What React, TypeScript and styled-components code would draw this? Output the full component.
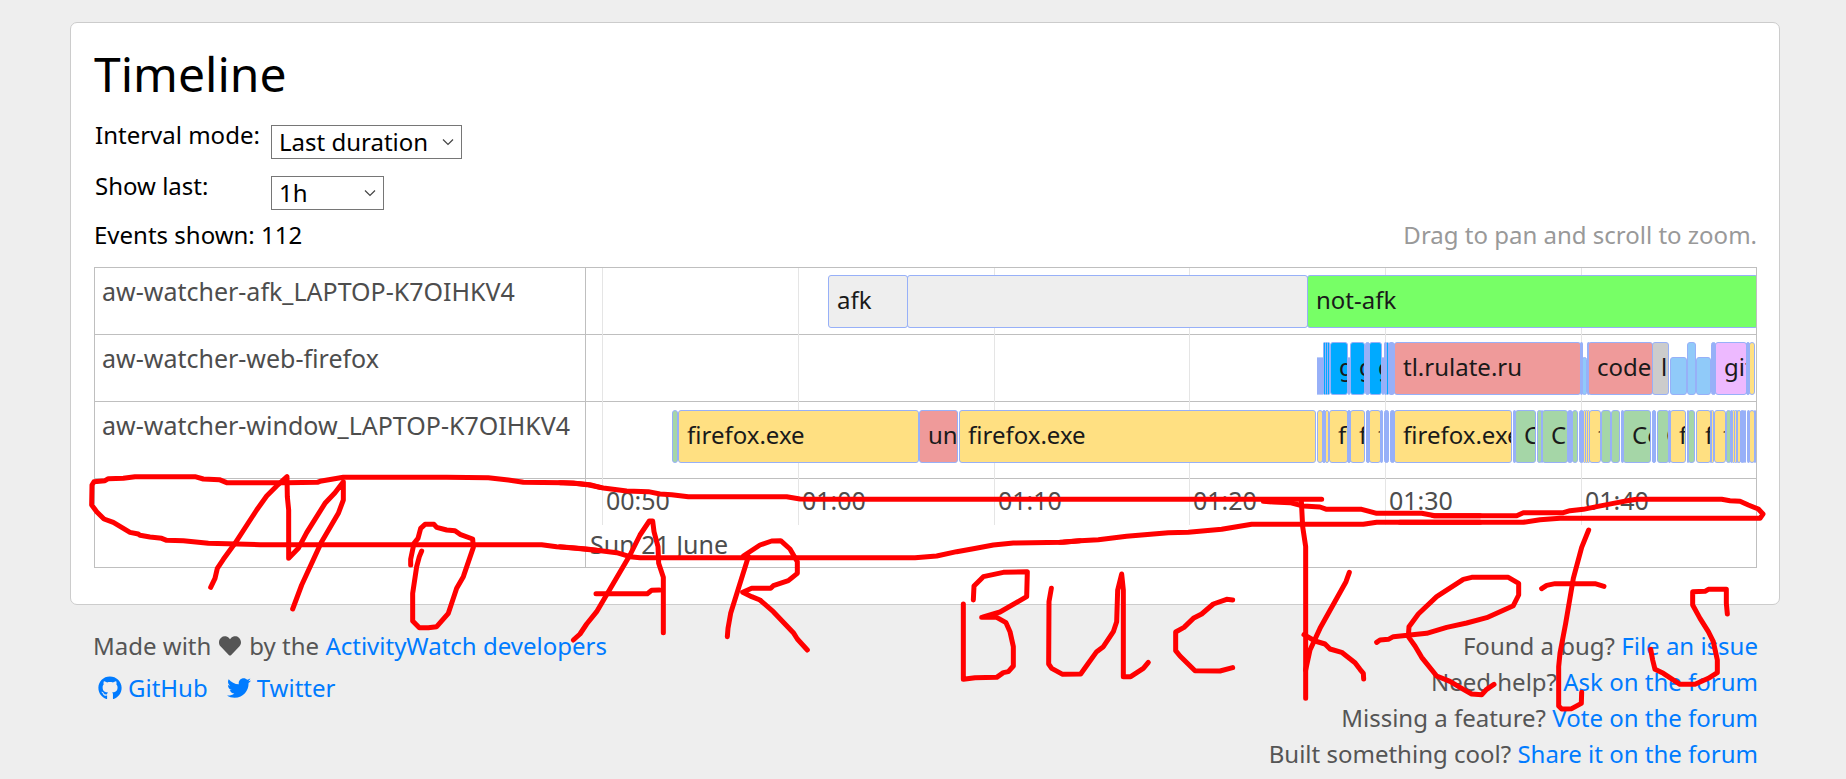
import React from "react";
import styled, { createGlobalStyle } from "styled-components";
import { FaGithub, FaHeart, FaTwitter } from "react-icons/fa";

const GlobalStyle = createGlobalStyle`
  *, *::before, *::after { box-sizing: border-box; }
  html { background: #eee; }
  body {
    margin: 0;
    background: #eee;
    color: #000;
    font: 24px/36px "Noto Sans", "Open Sans", sans-serif;
  }
`;

const Page = styled.div`
  position: relative;
  padding: 22px 66px 7px 70px;
`;

const Card = styled.main`
  padding: 22px 22px 36px 23px;
  background: #fff;
  border: 1px solid #ccc;
  border-radius: 7px;
`;

const Title = styled.h1`
  margin: 0 0 14px;
  font-size: 48px;
  line-height: 58px;
  font-weight: 400;
`;

const Settings = styled.form`
  display: grid;
  grid-template-columns: 176px auto;
  row-gap: 9px;
  align-items: start;
  padding-left: 1px;
`;

const SelectBox = styled.div<{ $width: number }>`
  display: grid;
  align-items: center;
  width: ${(p) => p.$width}px;
  margin-top: 8px;
  > * { grid-area: 1 / 1; }
  > svg { justify-self: end; margin-right: 8px; pointer-events: none; }
`;

const Select = styled.select`
  appearance: none;
  width: 100%;
  height: 34px;
  padding: 0 26px 0 7px;
  border: 1px solid #767676;
  border-radius: 0;
  background: #fff;
  color: #000;
  font: inherit;
  line-height: 32px;
`;

const Summary = styled.div`
  display: flex;
  justify-content: space-between;
  margin: 7px 0 14px;
`;

const Hint = styled.span`
  color: #999;
`;

const Timeline = styled.section`
  display: flex;
  border: 1px solid #bfbfbf;
  color: #4d4d4d;
  font-size: 25px;
`;

const Buckets = styled.div`
  flex: none;
  width: 491px;
  border-right: 1px solid #bfbfbf;
`;

const BucketName = styled.div<{ $tall?: boolean }>`
  height: ${(p) => (p.$tall ? 77 : 67)}px;
  padding: 5px 7px;
  border-bottom: 1px solid #bfbfbf;
  white-space: nowrap;
`;

const Tracks = styled.div`
  position: relative;
  flex: 1;
  min-width: 0;
  overflow: hidden;
`;

const GridLine = styled.div`
  position: absolute;
  top: 0;
  bottom: 42px;
  width: 1px;
  background: #e5e5e5;
`;

const Lane = styled.div<{ $tall?: boolean }>`
  height: ${(p) => (p.$tall ? 77 : 67)}px;
  padding-top: ${(p) => (p.$tall ? 8 : 7)}px;
  border-bottom: 1px solid #bfbfbf;
`;

const LaneCanvas = styled.div`
  position: relative;
  height: 53px;
`;

const Event = styled.div<{ $color: string; $short?: boolean }>`
  position: absolute;
  bottom: 0;
  height: ${(p) => (p.$short ? 38 : 53)}px;
  padding: 6px 0 0 8px;
  overflow: hidden;
  border: 1px solid #97b0f8;
  border-radius: 3px;
  background: ${(p) => p.$color};
  color: #1a1a1a;
  font-size: 24px;
  white-space: nowrap;
`;

const Axis = styled.div`
  height: 88px;
  padding-top: 3px;
`;

const Times = styled.div`
  position: relative;
  height: 44px;
`;

const Time = styled.span`
  position: absolute;
  padding-left: 4px;
`;

const Day = styled.div`
  padding-left: 4px;
`;

const Footer = styled.footer`
  display: flex;
  justify-content: space-between;
  padding: 23px 22px 0 23px;
  color: #555;
`;

const Credits = styled.div`
  display: flex;
  flex-direction: column;
  gap: 6px;
`;

const Line = styled.div`
  display: flex;
  align-items: center;
  gap: 8px;
`;

const Socials = styled(Line)`
  gap: 19px;
  padding-left: 5px;
`;

const Link = styled.a`
  color: #007bff;
  text-decoration: none;
`;

const SocialLink = styled(Link)`
  display: flex;
  align-items: center;
  gap: 6px;
`;

const Help = styled.div`
  text-align: right;
`;

const Annotation = styled.svg`
  position: absolute;
  top: 0;
  left: 0;
  width: 100%;
  pointer-events: none;
  fill: none;
  stroke: #f00;
  stroke-width: 15;
  stroke-linecap: round;
  stroke-linejoin: round;
`;

// Visible span of the timeline, in three-second ticks.
const SPAN = 1170;
const at = (tick: number) => `${(tick / SPAN) * 100}%`;

const GREY = "#eee";
const LIME = "#77ff66";
const AMBER = "#ffe082";
const ROSE = "#ef9a9a";
const LEAF = "#a5d6a7";
const AZURE = "#00aaff";
const SKY = "#90caf9";
const SILVER = "#ccc";
const ORCHID = "#edb9ff";
const BLIP = "#97b0f8";

type Ev = [start: number, end: number, color: string, text?: string, short?: boolean];

const afk: Ev[] = [
  [242, 322, GREY, "afk"],
  [321, 722, GREY],
  [721, 1172, LIME, "not-afk"],
];

const web: Ev[] = [
  [731, 733, SKY, "", true],
  [733, 735, SKY, "", true],
  [735, 737, SKY, "", true],
  [737, 740, AZURE],
  [739, 742, AZURE],
  [741, 744, AZURE],
  [744, 762, AZURE, "github.com"],
  [762, 764, BLIP, "", true],
  [764, 779, AZURE, "github.com"],
  [779, 784, BLIP],
  [783, 796, AZURE, "github.com"],
  [796, 798, BLIP, "", true],
  [798, 801, BLIP],
  [800, 803, AZURE],
  [802, 809, BLIP],
  [808, 995, ROSE, "tl.rulate.ru"],
  [994, 997, BLIP],
  [996, 1001, SKY, "", true],
  [1001, 1004, BLIP],
  [1002, 1067, ROSE, "codeload"],
  [1066, 1083, SILVER, "localhost"],
  [1084, 1101, SKY, "", true],
  [1101, 1110, SKY],
  [1110, 1125, SKY, "", true],
  [1125, 1130, BLIP],
  [1129, 1161, ORCHID, "github"],
  [1160, 1164, BLIP],
  [1163, 1169, AMBER],
];

const windows: Ev[] = [
  [86, 92, LEAF],
  [92, 333, AMBER, "firefox.exe"],
  [333, 372, ROSE, "unknown"],
  [373, 730, AMBER, "firefox.exe"],
  [731, 737, AMBER],
  [736, 740, BLIP],
  [739, 743, AMBER],
  [743, 762, AMBER, "firefox.exe"],
  [761, 765, BLIP],
  [764, 779, AMBER, "firefox.exe"],
  [780, 784, BLIP],
  [783, 795, AMBER, "firefox.exe"],
  [794, 797, BLIP],
  [798, 803, BLIP],
  [804, 809, BLIP],
  [808, 926, AMBER, "firefox.exe"],
  [927, 930, BLIP],
  [929, 950, LEAF, "Code.exe"],
  [951, 956, LEAF],
  [955, 957, BLIP],
  [956, 982, LEAF, "Code.exe"],
  [981, 987, BLIP],
  [986, 992, LEAF],
  [993, 998, BLIP],
  [997, 1000, AMBER],
  [999, 1002, AMBER],
  [1001, 1004, AMBER],
  [1003, 1015, AMBER, "firefox.exe"],
  [1015, 1025, LEAF],
  [1025, 1034, LEAF],
  [1035, 1038, BLIP],
  [1037, 1065, LEAF, "Code.exe"],
  [1066, 1070, BLIP],
  [1071, 1083, LEAF, "Code.exe"],
  [1082, 1085, BLIP],
  [1084, 1100, AMBER, "firefox.exe"],
  [1101, 1103, BLIP],
  [1102, 1109, LEAF],
  [1110, 1125, AMBER, "firefox.exe"],
  [1124, 1126, BLIP],
  [1125, 1128, AMBER],
  [1128, 1140, AMBER, "firefox.exe"],
  [1140, 1145, LEAF],
  [1144, 1147, BLIP],
  [1146, 1149, AMBER],
  [1148, 1151, AMBER],
  [1150, 1152, BLIP],
  [1151, 1155, AMBER],
  [1154, 1159, BLIP],
  [1158, 1160, AMBER],
  [1161, 1164, BLIP],
  [1163, 1169, AMBER],
  [1168, 1170, BLIP],
];

const ticks: [number, string][] = [
  [16, "00:50"],
  [212, "01:00"],
  [408, "01:10"],
  [603, "01:20"],
  [799, "01:30"],
  [995, "01:40"],
];

const helpLinks = [
  ["Found a bug?", "File an issue"],
  ["Need help?", "Ask on the forum"],
  ["Missing a feature?", "Vote on the forum"],
  ["Built something cool?", "Share it on the forum"],
];

function Chevron() {
  return (
    <svg width="12" height="8" viewBox="0 0 12 8" fill="none" stroke="#444" strokeWidth="1.2" aria-hidden="true">
      <path d="M1 1.5 L6 6.5 L11 1.5" />
    </svg>
  );
}

function Bars({ events, tall }: { events: Ev[]; tall?: boolean }) {
  return (
    <Lane $tall={tall}>
      <LaneCanvas>
        {events.map(([start, end, color, text, short]) => (
          <Event
            key={start}
            $color={color}
            $short={short}
            style={{
              left: at(start),
              width: at(end - start),
              ...(end - start < 10 ? { padding: 0 } : null),
            }}
          >
            {text}
          </Event>
        ))}
      </LaneCanvas>
    </Lane>
  );
}

function Scribble() {
  return (
    <Annotation viewBox="0 0 5538 2337" aria-hidden="true">
      <g transform="translate(240 1380)">
        <polyline points="1560,82 1530,74 1500,71 1450,68 1330,67 1285,60 1225,53 1100,52 790,52 720,64 712,67 620,68 440,68 418,59 370,57 345,50 165,50 130,55 85,56 75,62 42,65 36,75 35,135 50,155 72,177 100,187 150,217 175,222 180,226 210,231 245,235 260,241 310,242 385,250 540,254 1385,254 1430,260 1480,264 1560,272" />
        <polyline points="392,382 405,355 412,325 430,298 465,250 530,150 560,108 590,78 621,50 622,110 626,150 626,295 655,265 680,218 735,130 765,98 790,65 790,120 775,160 725,245 665,375 638,447" />
        <polyline points="992,315 992,298 1002,250 1014,235 1022,205 1035,193 1062,193 1070,202 1100,210 1125,212 1140,223 1178,237 1180,262 1150,350 1130,385 1105,460 1070,500 1045,503 1018,503 998,483 998,400 1010,320 1018,290 1025,273" />
      </g>
      <g transform="translate(1680 1380)">
        <polyline points="0,68 40,69 80,74 130,84 200,93 265,95 300,102 335,104 385,110 680,110 720,117 760,118 2285,118" />
        <polyline points="0,260 80,267 170,278 210,290 240,293 1065,293 1130,288 1190,275 1240,266 1300,255 1360,249 1510,247 1560,242" />
        <polyline points="40,540 60,522 80,492 110,455 210,285 240,225 268,183 278,183 282,215 294,260 296,310 310,352 310,518" />
        <polyline points="108,401 262,401 275,391 298,390" />
        <polyline points="502,530 504,505 512,460 565,290 550,288 600,255 635,243 662,242 690,267 712,305 712,340 685,362 640,377 632,385 575,385 548,397 575,410 600,420 640,455 700,518 712,537 742,570" />
        <polyline points="1210,432 1210,658 1245,653 1310,652 1330,638 1345,635 1360,618 1360,560 1350,515 1338,488 1310,472 1265,472 1320,456 1400,410 1402,335 1330,337 1270,350 1242,378 1240,420" />
        <polyline points="1474,385 1467,425 1466,612 1475,625 1508,643 1562,642 1585,610 1610,575 1630,560 1660,515 1670,485 1673,390 1685,342 1690,390 1690,650 1712,650 1750,625 1765,607" />
      </g>
      <g transform="translate(3180 1380)">
        <polyline points="610,124 640,126 690,128 730,138 780,141 800,148 905,148 950,160 1085,160 1125,167 1260,167" />
        <polyline points="0,247 60,242 115,239 200,229 325,218 385,217 485,208 530,200 575,193 910,193 950,187 1260,187" />
        <polyline points="518,420 500,418 460,432 425,462 400,475 372,502 347,516 347,572 360,588 405,632 480,633 518,623" />
        <polyline points="724,122 728,200 737,260 737,715" />
        <polyline points="868,337 858,365 780,505 750,570 737,630" />
        <polyline points="732,524 765,543 795,552 810,567 845,577 885,608 900,628 910,640 911,657" />
      </g>
      <g transform="translate(4200 1380)">
        <polyline points="100,167 350,167 370,158 490,158 510,152 550,148 590,140 640,130 690,121 710,118 965,118 990,122 1020,124 1045,135 1075,147 1089,162 1080,175 480,175 420,179 370,187 0,187" />
        <polyline points="-70,547 -60,540 -35,538 -20,530 80,520 140,502 200,489 260,473 340,437 356,405 356,370 325,352 215,352 190,358 110,410 55,462 27,500 25,530 45,558 65,592 110,648 150,664 190,688 215,702 245,704 260,688 282,673" />
        <polyline points="425,386 440,376 465,371 585,371 612,379" />
        <polyline points="566,210 545,262 520,355 497,490 480,580 476,620 476,738 485,747 515,746 544,730 545,697" />
        <polyline points="982,462 979,430 979,388 925,388 915,394 878,395 878,435 900,475 925,515 940,545 952,600 952,638 925,655 885,673 840,673 790,640 765,628 758,600 752,568" />
      </g>
    </Annotation>
  );
}

export default function App() {
  return (
    <>
      <GlobalStyle />
      <Page>
        <Card>
          <Title>Timeline</Title>
          <Settings>
            <label htmlFor="mode">Interval mode:</label>
            <SelectBox $width={191}>
              <Select id="mode" defaultValue="last">
                <option value="last">Last duration</option>
                <option value="range">Date range</option>
              </Select>
              <Chevron />
            </SelectBox>
            <label htmlFor="duration">Show last:</label>
            <SelectBox $width={113}>
              <Select id="duration" defaultValue="1h">
                <option>1h</option>
                <option>2h</option>
              </Select>
              <Chevron />
            </SelectBox>
          </Settings>
          <Summary>
            <span>Events shown: 112</span>
            <Hint>Drag to pan and scroll to zoom.</Hint>
          </Summary>
          <Timeline>
            <Buckets>
              <BucketName>aw-watcher-afk_LAPTOP-K7OIHKV4</BucketName>
              <BucketName>aw-watcher-web-firefox</BucketName>
              <BucketName $tall>aw-watcher-window_LAPTOP-K7OIHKV4</BucketName>
            </Buckets>
            <Tracks>
              {ticks.map(([tick]) => (
                <GridLine key={tick} style={{ left: at(tick) }} />
              ))}
              <Bars events={afk} />
              <Bars events={web} />
              <Bars events={windows} tall />
              <Axis>
                <Times>
                  {ticks.map(([tick, label]) => (
                    <Time key={tick} style={{ left: at(tick) }}>
                      {label}
                    </Time>
                  ))}
                </Times>
                <Day>Sun 21 June</Day>
              </Axis>
            </Tracks>
          </Timeline>
        </Card>
        <Footer>
          <Credits>
            <Line>
              <span>Made with</span>
              <FaHeart size={22} aria-label="love" />
              <span>
                by the <Link href="#developers">ActivityWatch developers</Link>
              </span>
            </Line>
            <Socials>
              <SocialLink href="#github">
                <FaGithub size={24} aria-hidden="true" />
                GitHub
              </SocialLink>
              <SocialLink href="#twitter">
                <FaTwitter size={24} aria-hidden="true" />
                Twitter
              </SocialLink>
            </Socials>
          </Credits>
          <Help>
            {helpLinks.map(([question, link]) => (
              <div key={link}>
                {question} <Link href="#help">{link}</Link>
              </div>
            ))}
          </Help>
        </Footer>
        <Scribble />
      </Page>
    </>
  );
}
